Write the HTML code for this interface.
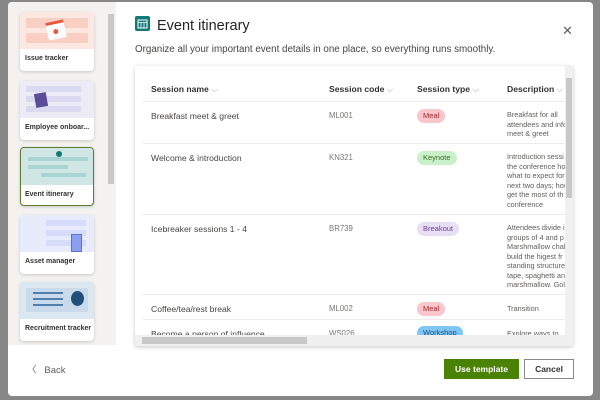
<!DOCTYPE html><html><head><style>
*{box-sizing:border-box;margin:0;padding:0}
body{width:600px;height:400px;background:#878787;font-family:"Liberation Sans",sans-serif;position:relative;overflow:hidden;color:#323130}
.dlg{position:absolute;left:8px;top:2px;width:585px;height:394px;background:#fff;border-radius:4px;overflow:hidden}
.left{position:absolute;left:0;top:0;width:108px;height:343px;background:#f3f2f1}
.sb{position:absolute;left:99px;top:0;width:8px;height:343px;background:#f3f2f1}
.sb i{position:absolute;left:1px;top:12px;width:6px;height:170px;background:#c8c8c8}
.card{position:absolute;left:12px;width:74px;height:59px;background:#fff;border-radius:4px;box-shadow:0 1px 3px rgba(0,0,0,.18);overflow:hidden;font-size:7px;font-weight:bold;color:#323130}
.card .im{height:37px}
.card span{position:absolute;left:5px;top:43px;white-space:nowrap}
.title{position:absolute;left:149px;top:16px;font-size:14.5px;color:#252423}
.sub{position:absolute;left:127px;top:42px;font-size:9.8px;color:#484644}
.panel{position:absolute;left:127px;top:64px;width:438px;height:280px;box-shadow:0 1px 4px rgba(0,0,0,.22);overflow:hidden;background:#fff}
.t{position:absolute;font-size:8.6px;color:#484644;white-space:nowrap}
.h{font-weight:bold;font-size:8.6px;color:#323130}
.c{color:#797775;font-size:7.8px}
.d{font-size:7.3px;color:#605e5c;line-height:9.5px}
.ln{position:absolute;left:8px;width:430px;height:1px;background:#edebe9}
.pill{position:absolute;height:14px;border-radius:7px;font-size:7.5px;padding:0 6px;line-height:14px}
.btn{position:absolute;top:357px;height:20px;font-size:8.5px;font-weight:bold;text-align:center;line-height:18px}
</style></head><body>
<div class="dlg">
<div class="left">
<div class="card" style="top:10px"><div class="im" style="background:#fde7e1"><div style="position:absolute;left:6px;top:6px;width:62px;height:10px;background:#f9cfc4"></div><div style="position:absolute;left:6px;top:21px;width:62px;height:10px;background:#f9cfc4"></div><div style="position:absolute;left:27px;top:9px;width:18px;height:18px;background:#fff;border-top:3px solid #e8583a;transform:rotate(-12deg)"><div style="position:absolute;left:6px;top:5px;width:5px;height:5px;border-radius:50%;background:#e8583a"></div></div></div><span>Issue tracker</span></div>
<div class="card" style="top:79px"><div class="im" style="background:#ecebf6"><div style="position:absolute;left:6px;top:5px;width:55px;height:6px;background:#dcdaf0"></div><div style="position:absolute;left:6px;top:15px;width:55px;height:6px;background:#dcdaf0"></div><div style="position:absolute;left:6px;top:25px;width:55px;height:6px;background:#dcdaf0"></div><div style="position:absolute;left:15px;top:12px;width:12px;height:14px;background:#5b4c9a;transform:rotate(-10deg)"></div></div><span>Employee onboar...</span></div>
<div class="card" style="top:145px;border:1.5px solid #5b7d2d"><div class="im" style="background:#cfe6e4"><div style="position:absolute;left:7px;top:9px;width:60px;height:4px;background:#a8d5d1"></div><div style="position:absolute;left:7px;top:17px;width:40px;height:4px;background:#a8d5d1"></div><div style="position:absolute;left:20px;top:25px;width:45px;height:4px;background:#a8d5d1"></div><div style="position:absolute;left:35px;top:3px;width:6px;height:6px;border-radius:50%;background:#0f7b78"></div></div><span style="left:4px">Event itinerary</span></div>
<div class="card" style="top:213px"><div class="im" style="background:#e8ebfb"><div style="position:absolute;left:26px;top:5px;width:40px;height:6px;background:#d6dcfa"></div><div style="position:absolute;left:26px;top:15px;width:40px;height:6px;background:#d6dcfa"></div><div style="position:absolute;left:26px;top:25px;width:40px;height:6px;background:#d6dcfa"></div><div style="position:absolute;left:51px;top:19px;width:11px;height:18px;background:#8c9ef0;border:1px solid #5b6fd6"></div></div><span>Asset manager</span></div>
<div class="card" style="top:280px"><div class="im" style="background:#dbe7f1"><div style="position:absolute;left:6px;top:6px;width:62px;height:24px;background:#c9dbea"></div><div style="position:absolute;left:13px;top:10px;width:30px;height:2px;background:#4e7fae;box-shadow:0 6px 0 #4e7fae,0 12px 0 #4e7fae"></div><div style="position:absolute;left:51px;top:9px;width:13px;height:15px;border-radius:50%;background:#1f4f7a"></div></div><span>Recruitment tracker</span></div>
</div>
<div class="sb"><i></i></div>
<svg style="position:absolute;left:127px;top:14px" width="15" height="15"><rect width="15" height="15" rx="2" fill="#0f7b78"/><rect x="3" y="4" width="9" height="8" fill="none" stroke="#fff" stroke-width="1"/><path d="M3 6.5h9M6 6.5v5.5M9 6.5v5.5" stroke="#fff" stroke-width=".8"/></svg>
<div class="title">Event itinerary</div>
<div style="position:absolute;left:554px;top:21px;font-size:13px;color:#605e5c">✕</div>
<div class="sub">Organize all your important event details in one place, so everything runs smoothly.</div>
<div class="panel">
<div class="t h" style="left:16px;top:18px">Session name <span style="color:#a19f9d;font-weight:normal">⌵</span></div>
<div class="t h" style="left:194px;top:18px">Session code <span style="color:#a19f9d;font-weight:normal">⌵</span></div>
<div class="t h" style="left:282px;top:18px">Session type <span style="color:#a19f9d;font-weight:normal">⌵</span></div>
<div class="t h" style="left:372px;top:18px">Description <span style="color:#a19f9d;font-weight:normal">⌵</span></div>
<div class="ln" style="top:35px"></div><div class="ln" style="top:77px"></div><div class="ln" style="top:148px"></div><div class="ln" style="top:228px"></div><div class="ln" style="top:253px"></div>
<div class="t" style="left:16px;top:45px">Breakfast meet &amp; greet</div><div class="t c" style="left:194px;top:45px">ML001</div><div class="pill" style="left:282px;top:43px;background:#f8c6cb;color:#a4262c">Meal</div><div class="t d" style="left:372px;top:44px">Breakfast for all<br>attendees and info<br>meet &amp; greet</div>
<div class="t" style="left:16px;top:87px">Welcome &amp; introduction</div><div class="t c" style="left:194px;top:87px">KN321</div><div class="pill" style="left:282px;top:85px;background:#c9f1c9;color:#3b6b1f">Keynote</div><div class="t d" style="left:372px;top:86px">Introduction sessi<br>the conference ho<br>what to expect for<br>next two days; how<br>get the most of th<br>conference</div>
<div class="t" style="left:16px;top:158px">Icebreaker sessions 1 - 4</div><div class="t c" style="left:194px;top:158px">BR739</div><div class="pill" style="left:282px;top:156px;background:#e9dff5;color:#6b3fa0">Breakout</div><div class="t d" style="left:372px;top:157px">Attendees divide i<br>groups of 4 and p<br>Marshmallow chal<br>build the higest fr<br>standing structure<br>tape, spaghetti an<br>marshmallow. Gol</div>
<div class="t" style="left:16px;top:238px">Coffee/tea/rest break</div><div class="t c" style="left:194px;top:238px">ML002</div><div class="pill" style="left:282px;top:236px;background:#f8c6cb;color:#a4262c">Meal</div><div class="t d" style="left:372px;top:238px">Transition</div>
<div class="t" style="left:16px;top:263px">Become a person of influence</div><div class="t c" style="left:194px;top:263px">WS026</div><div class="pill" style="left:282px;top:260px;background:#7fc6f5;color:#1f4f7a">Workshop</div><div class="t d" style="left:372px;top:263px">Explore ways to</div>
<div style="position:absolute;left:0;top:269px;width:430px;height:11px;background:#f0f0f0"><div style="position:absolute;left:7px;top:2px;width:165px;height:7px;background:#c8c8c8"></div></div>
<div style="position:absolute;left:430px;top:0;width:8px;height:280px;background:#f0f0f0"><div style="position:absolute;left:1px;top:12px;width:6px;height:120px;background:#c8c8c8"></div></div>
</div>
<div style="position:absolute;left:19px;top:360px;font-size:9.5px;color:#605e5c">〈&nbsp;&nbsp;&nbsp;Back</div>
<div class="btn" style="left:436px;width:75px;background:#498205;color:#fff;border:1px solid #498205">Use template</div>
<div class="btn" style="left:516px;width:50px;background:#fff;border:1px solid #8a8886;color:#323130">Cancel</div>
</div>
</body></html>
